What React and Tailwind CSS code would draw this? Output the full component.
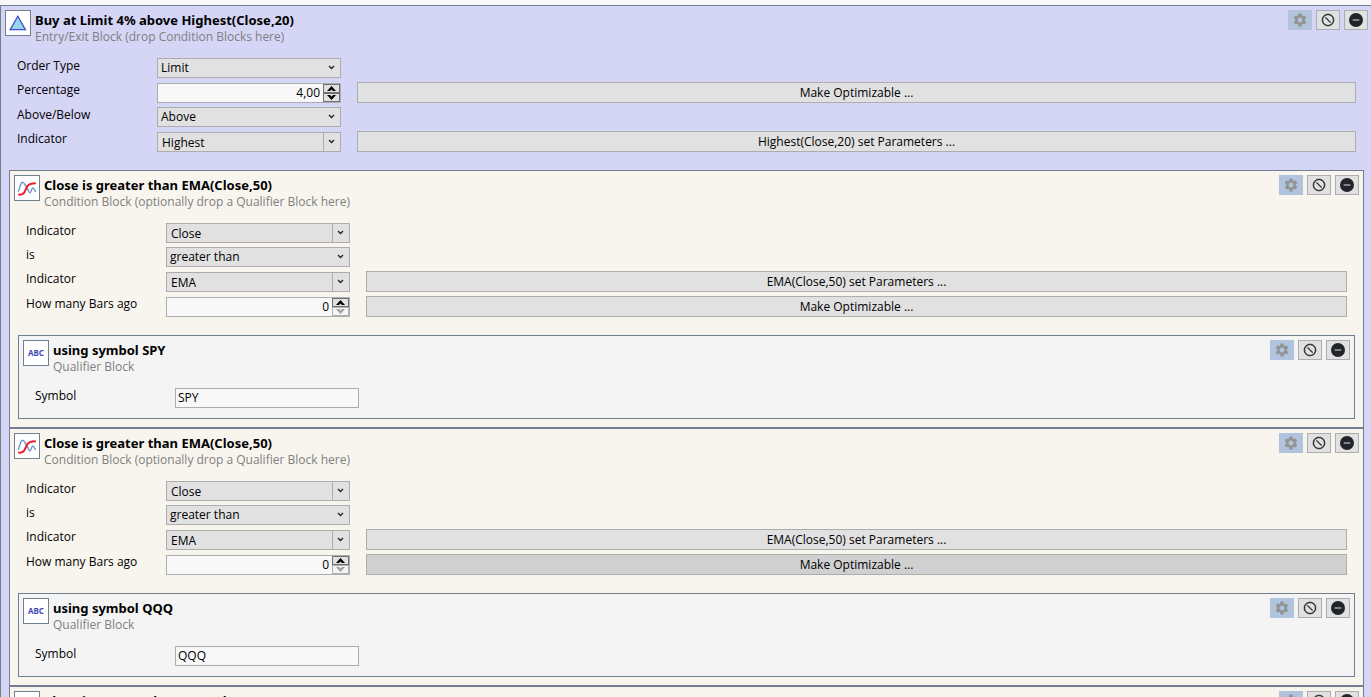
import React from "react";
import { BsSlashCircle, BsDashCircleFill } from "react-icons/bs";
import { MdSettings } from "react-icons/md";

const TRIANGLE = "triangle";
const LINES = "lines";
const ABC = "abc";

const conditionFields = (hovered) => [
  { kind: "combo", label: "Indicator", value: "Close" },
  { kind: "select", label: "is", value: "greater than" },
  { kind: "combo", label: "Indicator", value: "EMA", action: "EMA(Close,50) set Parameters ..." },
  { kind: "number", label: "How many Bars ago", value: "0", atMin: true, action: "Make Optimizable ...", hovered },
];

const entry = {
  id: "entry",
  icon: TRIANGLE,
  title: "Buy at Limit 4% above Highest(Close,20)",
  hint: "Entry/Exit Block (drop Condition Blocks here)",
  fields: [
    { kind: "select", label: "Order Type", value: "Limit" },
    { kind: "number", label: "Percentage", value: "4,00", action: "Make Optimizable ..." },
    { kind: "select", label: "Above/Below", value: "Above" },
    { kind: "combo", label: "Indicator", value: "Highest", action: "Highest(Close,20) set Parameters ..." },
  ],
};

const conditions = [
  { id: "c1", symbol: "SPY", hovered: false },
  { id: "c2", symbol: "QQQ", hovered: true },
  { id: "c3", symbol: null, hovered: false },
].map(({ id, symbol, hovered }) => ({
  id,
  icon: LINES,
  title: "Close is greater than EMA(Close,50)",
  hint: "Condition Block (optionally drop a Qualifier Block here)",
  fields: conditionFields(hovered),
  qualifier: symbol && {
    id: id + "-q",
    icon: ABC,
    title: "using symbol " + symbol,
    hint: "Qualifier Block",
    fields: [{ kind: "text", label: "Symbol", value: symbol }],
  },
}));

function BlockIcon({ type }) {
  return (
    <div className="flex size-[26px] shrink-0 items-center justify-center border border-[#708090] bg-white">
      {type === TRIANGLE && (
        <svg width="20" height="20" viewBox="0 0 20 20" aria-hidden="true">
          <path d="M9.8 3.2 L17.4 16.6 H2.2 Z" fill="#96d9ec" stroke="#4350c8" strokeWidth="1.3" />
        </svg>
      )}
      {type === LINES && (
        <svg width="20" height="20" viewBox="0 0 20 20" fill="none" aria-hidden="true">
          <path
            d="M1 13.7 C2.5 12.5 3.2 4.3 5.5 4.3 C7.5 4.3 8 7.5 9.5 9 C11 10.5 11.5 14.7 13 14.7 C14.5 14.7 14.3 10 15.8 10 C17.2 10 17.2 13 19 13.7"
            stroke="#7095c4"
            strokeWidth="1.4"
          />
          <path
            d="M1.2 16.6 C5.5 17.2 7.2 15.8 8.2 12.5 L10.2 8.5 C11.5 5.8 13.5 5.2 18.8 5.2"
            stroke="#f01c2c"
            strokeWidth="2"
          />
        </svg>
      )}
      {type === ABC && (
        <span className="font-['Noto_Sans','Open_Sans',sans-serif] text-[8px] leading-none font-bold text-[#3f48b4]">
          ABC
        </span>
      )}
    </div>
  );
}

function Toolbar() {
  const base = "flex h-5 w-6 items-center justify-center";
  return (
    <div className="flex gap-1">
      <button type="button" disabled aria-label="Settings" className={base + " bg-[#b0c4de] text-[#939393]"}>
        <MdSettings size={16} />
      </button>
      <button type="button" aria-label="Disable" className={base + " border border-[#adadad] bg-[#e1e1e1] text-[#212529]"}>
        <BsSlashCircle size={12} strokeWidth={0.8} className="-scale-x-100 overflow-visible" />
      </button>
      <button type="button" aria-label="Remove" className={base + " border border-[#adadad] bg-[#e1e1e1] text-[#212529]"}>
        <BsDashCircleFill size={14} />
      </button>
    </div>
  );
}

function Chevron() {
  return (
    <svg width="7" height="5" viewBox="0 0 7 5" fill="none" aria-hidden="true">
      <path d="M1 1 L3.5 3.5 L6 1" stroke="#222" strokeWidth="1.3" />
    </svg>
  );
}

function Control({ id, field }) {
  const { kind, value, atMin } = field;

  if (kind === "text") {
    return (
      <input
        id={id}
        type="text"
        defaultValue={value}
        className="h-5 w-46 border border-[#abadb3] bg-[#f8f8f8] px-[2px] pb-[2px]"
      />
    );
  }

  if (kind === "number") {
    return (
      <div className="flex h-5 w-46 border border-[#abadb3] bg-[#f8f8f8]">
        <input id={id} type="text" inputMode="decimal" defaultValue={value} className="min-w-0 flex-1 pr-[3px] text-right" />
        <div className="flex w-[17px] flex-col">
          <button
            type="button"
            aria-label="Increase"
            className="flex h-[9px] items-center justify-center border border-[#707070] bg-[#e1e1e1]"
          >
            <svg width="9" height="5" viewBox="0 0 9 5" aria-hidden="true">
              <path d="M0 5 L4.5 0 L9 5 H6 L4.5 3.5 L3 5 Z" fill="#000" />
            </svg>
          </button>
          <button
            type="button"
            aria-label="Decrease"
            disabled={atMin}
            className={
              atMin
                ? "flex h-[9px] items-center justify-center border border-[#adb2b5] bg-[#f4f4f4] text-[#a0a0a0]"
                : "flex h-[9px] items-center justify-center border border-[#707070] bg-[#e1e1e1] text-black"
            }
          >
            <svg width="9" height="5" viewBox="0 0 9 5" aria-hidden="true">
              <path d="M0 0 L4.5 5 L9 0 H6 L4.5 1.5 L3 0 Z" fill="currentColor" />
            </svg>
          </button>
        </div>
      </div>
    );
  }

  return (
    <div className="relative h-5 w-46">
      <select
        id={id}
        defaultValue={value}
        className={
          kind === "combo"
            ? "block h-5 w-full appearance-none border border-[#adadad] bg-[#e1e1e1] pt-px pr-5 pl-1"
            : "block h-5 w-full appearance-none border border-[#adadad] bg-[#e1e1e1] pr-5 pl-[3px]"
        }
      >
        <option>{value}</option>
      </select>
      <div
        className={
          kind === "combo"
            ? "pointer-events-none absolute inset-y-0 right-0 flex w-[18px] items-center justify-center border-l border-[#adadad] pr-[2px] pb-[2px]"
            : "pointer-events-none absolute inset-y-0 right-0 flex w-[18px] items-center justify-center pr-px pb-[2px]"
        }
      >
        <Chevron />
      </div>
    </div>
  );
}

function FieldRow({ id, field }) {
  return (
    <div className="flex items-end">
      <label htmlFor={id} className="w-35 shrink-0 self-start leading-4">
        {field.label}
      </label>
      <Control id={id} field={field} />
      {field.action && (
        <button
          type="button"
          className={
            field.hovered
              ? "ml-4 h-[21px] flex-1 border border-[#adadad] bg-[#d0d0d0]"
              : "ml-4 h-[21px] flex-1 border border-[#adadad] bg-[#e1e1e1]"
          }
        >
          {field.action}
        </button>
      )}
    </div>
  );
}

function Block({ block, className, children }) {
  return (
    <section className={className}>
      <header className="flex h-[52px] items-start gap-1 p-1 pb-0">
        <BlockIcon type={block.icon} />
        <div className="min-w-0 flex-1">
          <h2 className="font-['Noto_Sans','Open_Sans',sans-serif] text-[13px] leading-5 font-bold">{block.title}</h2>
          <p className="leading-[14px] text-[#808080]">{block.hint}</p>
        </div>
        <Toolbar />
      </header>
      <div className="flex flex-col gap-1 px-4 pb-[10px]">
        {block.fields.map((field, i) => (
          <FieldRow key={i} id={block.id + "-" + i} field={field} />
        ))}
      </div>
      {children}
    </section>
  );
}

export default function App() {
  return (
    <main className="h-screen overflow-hidden bg-[#f8f8f8] pt-[5px] font-['Open_Sans','Noto_Sans',sans-serif] text-[12px] text-black">
      <Block block={entry} className="-mr-px border-t border-l border-[#708090] bg-[#d5d5f6]">
        <div className="mx-2 mt-2">
          {conditions.map((c) => (
            <Block key={c.id} block={c} className="border border-[#708090] bg-[#f8f5ee]">
              {c.qualifier && (
                <div className="m-2">
                  <Block block={c.qualifier} className="border border-[#708090] bg-[#f4f4f4]" />
                </div>
              )}
            </Block>
          ))}
        </div>
      </Block>
    </main>
  );
}
